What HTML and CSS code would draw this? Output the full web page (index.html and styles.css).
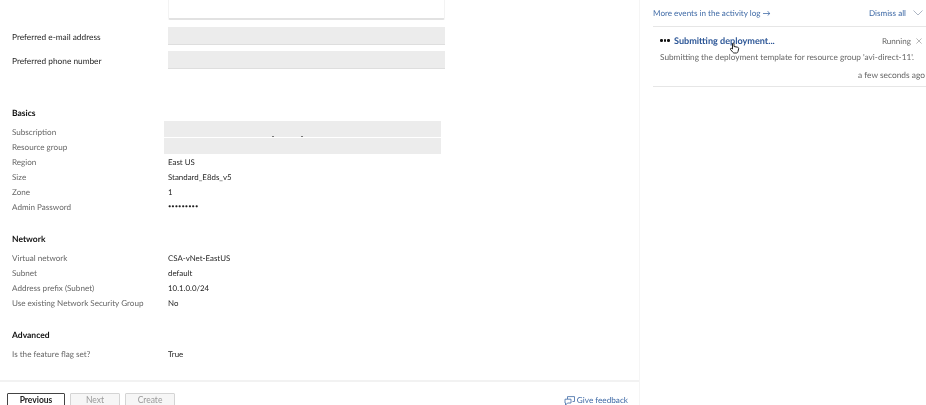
FILE: index.html
```html
<!DOCTYPE html>
<html lang="en">
<head>
    <meta charset="UTF-8">
    <meta name="viewport" content="width=device-width, initial-scale=1.0">
    <title>Create a virtual machine - Review</title>
    <link rel="stylesheet" href="styles.css">
</head>
<body>
    <div class="page">
        <!-- Review form -->
        <main class="wizard">
            <div class="wizard-body">
                <div class="form-stub"></div>
                <div class="form-row">
                    <label class="form-label">Preferred e-mail address</label>
                    <div class="form-input"></div>
                </div>
                <div class="form-row">
                    <label class="form-label">Preferred phone number</label>
                    <div class="form-input"></div>
                </div>

                <section class="summary summary-basics">
                    <h2>Basics</h2>
                    <div class="summary-row"><span class="key">Subscription</span><span class="value redacted redacted-first"></span></div>
                    <div class="summary-row"><span class="key">Resource group</span><span class="value redacted redacted-second"></span></div>
                    <div class="summary-row"><span class="key">Region</span><span class="value">East US</span></div>
                    <div class="summary-row"><span class="key">Size</span><span class="value">Standard_E8ds_v5</span></div>
                    <div class="summary-row"><span class="key">Zone</span><span class="value">1</span></div>
                    <div class="summary-row"><span class="key">Admin Password</span><span class="value value-password">•••••••••</span></div>
                </section>

                <section class="summary summary-network">
                    <h2>Network</h2>
                    <div class="summary-row"><span class="key">Virtual network</span><span class="value">CSA-vNet-EastUS</span></div>
                    <div class="summary-row"><span class="key">Subnet</span><span class="value">default</span></div>
                    <div class="summary-row"><span class="key">Address prefix (Subnet)</span><span class="value">10.1.0.0/24</span></div>
                    <div class="summary-row"><span class="key">Use existing Network Security Group</span><span class="value">No</span></div>
                </section>

                <section class="summary summary-advanced">
                    <h2>Advanced</h2>
                    <div class="summary-row"><span class="key">Is the feature flag set?</span><span class="value">True</span></div>
                </section>
            </div>

            <footer class="wizard-footer">
                <button class="button button-primary">Previous</button>
                <button class="button" disabled>Next</button>
                <button class="button" disabled>Create</button>
                <a class="feedback" href="#">
                    <svg class="feedback-icon" viewBox="0 0 11 10" width="11" height="10" aria-hidden="true">
                        <path d="M3.500 3V0.600h7V5.500H8.500M1 3.200h6V7H3.500L1.500 9.200V7H1z" fill="none" stroke="#3f6aa6" stroke-width="0.8"/>
                    </svg>
                    Give feedback
                </a>
            </footer>
        </main>

        <!-- Notifications pane -->
        <aside class="notifications">
            <div class="notifications-head">
                <a class="link" href="#">More events in the activity log →</a>
                <a class="dismiss" href="#">Dismiss all</a>
                <svg class="chevron" viewBox="0 0 10 6" width="10" height="6" aria-hidden="true">
                    <path d="M0.500 0.500L5 5l4.500-4.500" fill="none" stroke="#8a96aa" stroke-width="0.7"/>
                </svg>
            </div>
            <div class="event">
                <div class="event-top">
                    <span class="dots"><i></i><i></i><i></i></span>
                    <a class="event-title" href="#">Submitting deployment...</a>
                    <span class="event-status">Running</span>
                    <svg class="close" viewBox="0 0 7 7" width="6" height="6" aria-hidden="true">
                        <path d="M0.500 0.500l6 6M6.500 0.500l-6 6" fill="none" stroke="#888" stroke-width="0.7"/>
                    </svg>
                </div>
                <p class="event-text">Submitting the deployment template for resource group 'avi-direct-11'.</p>
                <p class="event-time">a few seconds ago</p>
                <svg class="cursor" viewBox="0 0 11 12" width="11" height="12" aria-hidden="true">
                    <path d="M3.500 7V1.800c0-1 1.500-1 1.500 0V4.500l3.500 0.700c1 0.200 1.300 0.800 1.100 1.800L9 9.500c-0.100 1-0.800 1.500-1.600 1.500H5.200c-0.600 0-1-0.300-1.300-0.700L1.500 7.500c-0.600-0.900 0.500-1.700 1.200-1z" fill="#fff" stroke="#222" stroke-width="1"/>
                </svg>
            </div>
        </aside>
    </div>
</body>
</html>
```

FILE: styles.css
```css
:root {
    --text-primary: #1f1f1f;
    --text-secondary: #666;
    --text-disabled: #999;
    --link: #3f6aa6;
    --title: #2b5596;
    --fill: #ececec;
    --border: #e6e6e6;
    --font-primary: 'Lato', 'Open Sans', sans-serif;
}

html, body {
    margin: 0;
    padding: 0;
    height: 100%;
    overflow: hidden;
    background-color: #fff;
}

body {
    font-family: var(--font-primary);
    font-size: 8.1px;
    color: var(--text-primary);
    text-rendering: geometricPrecision;
}

a {
    text-decoration: none;
}

.page {
    display: flex;
    height: 405px;
    filter: blur(0.3px);
}

/* Left side */
.wizard {
    width: 640px;
    flex-shrink: 0;
    display: flex;
    flex-direction: column;
    border-right: 1px solid #f5f5f5;
    box-sizing: border-box;
}

.wizard-body {
    flex: 1;
    padding-left: 12px;
}

.form-stub {
    width: 277px;
    height: 20px;
    margin-left: 156px;
    box-sizing: border-box;
    border: 1px solid #f3f3f3;
    border-top: none;
    border-bottom: 2px solid #e2e2e2;
    border-radius: 0 0 2px 2px;
}

.form-row {
    display: flex;
    align-items: center;
    margin-top: 6px;
}

.form-stub + .form-row {
    margin-top: 7px;
}

.form-label {
    width: 156px;
    padding-top: 2px;
    font-size: 8.3px;
}

.form-input {
    width: 277px;
    height: 18px;
    background-color: var(--fill);
    border-bottom: 1px solid #dedede;
    box-sizing: border-box;
}

.summary h2 {
    margin: 0 0 4px;
    height: 15px;
    line-height: 15px;
    font-size: 8.5px;
    font-weight: 700;
    color: #111;
}

.summary-basics {
    margin-top: 37px;
}

.summary-network {
    margin-top: 17px;
}

.summary-advanced {
    margin-top: 17px;
}

.summary-row {
    display: flex;
    height: 15px;
    line-height: 15px;
}

.key {
    width: 156px;
    color: var(--text-secondary);
}

.value {
    color: var(--text-primary);
    font-size: 7.9px;
}

.value-password {
    font-size: 5.800px;
    line-height: 13px;
}

.redacted {
    width: 277px;
    height: 16px;
    margin-left: -4px;
    background-color: var(--fill);
}

.redacted-first {
    margin-top: -4px;
    background-image: linear-gradient(#777, #777), linear-gradient(#777, #777);
    background-size: 2px 1px;
    background-position: 108px 15px, 137px 15px;
    background-repeat: no-repeat;
}

.redacted-second {
    margin-top: -2px;
}

.wizard-footer {
    height: 25px;
    box-sizing: border-box;
    display: flex;
    align-items: flex-start;
    gap: 5px;
    padding: 11px 11px 0 7px;
    border-top: 2px solid #f2f2f2;
}

.button {
    width: 50px;
    height: 15px;
    padding: 1px 0 2px;
    font-family: var(--font-primary);
    font-size: 8.5px;
    line-height: 10px;
    color: var(--text-disabled);
    background-color: #f6f6f6;
    border: 1px solid #d4d4d4;
    border-radius: 1px;
}

.button-primary {
    width: 58px;
    color: #222;
    font-weight: 700;
    background-color: #fff;
    border-color: #444;
}

.feedback {
    margin-left: auto;
    display: flex;
    align-items: center;
    gap: 2px;
    color: var(--link);
    font-size: 8.2px;
    line-height: 11px;
    padding-top: 2px;
}

/* Notifications */
.notifications {
    flex: 1;
    padding-left: 13px;
}

.notifications-head {
    display: flex;
    align-items: center;
    height: 26px;
    border-bottom: 1px solid var(--border);
    padding-right: 3px;
}

.link {
    color: var(--link);
}

.dismiss {
    margin-left: auto;
    margin-right: 7px;
    color: var(--link);
}

.event {
    position: relative;
    height: 60px;
    box-sizing: border-box;
    padding: 6px 0 0 7px;
    border-bottom: 1px solid var(--border);
}

.event-top {
    display: flex;
    align-items: center;
    height: 15px;
    padding-right: 4px;
}

.dots {
    width: 14px;
    display: flex;
    gap: 1px;
}

.dots i {
    width: 2.500px;
    height: 2.500px;
    border-radius: 50%;
    background-color: #111;
}

.event-title {
    color: var(--title);
    font-size: 9.1px;
    font-weight: 700;
}

.event-status {
    margin-left: auto;
    margin-right: 5px;
    color: var(--text-secondary);
}

.event-text {
    margin: 3px 0 0;
    line-height: 12px;
    font-size: 8.25px;
    color: var(--text-secondary);
    white-space: nowrap;
}

.event-time {
    margin: 6px 0 0;
    line-height: 12px;
    font-size: 8.4px;
    text-align: right;
    padding-right: 1px;
    color: var(--text-secondary);
}

.cursor {
    position: absolute;
    left: 76px;
    top: 15px;
}
```
